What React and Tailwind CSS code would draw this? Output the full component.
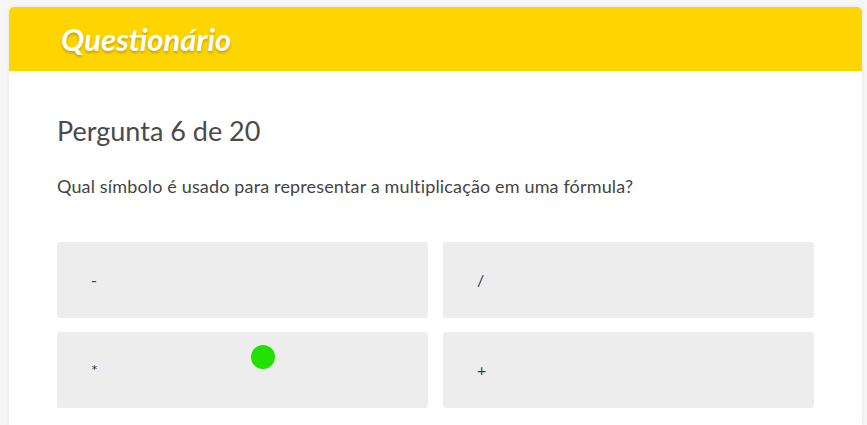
import React from 'react';

const answers = ['-', '/', '*', '+'];

function AnswerButton({ label }) {
    return (
        <button className="h-[76px] bg-[#ededed] rounded-[3px] text-left pl-[34px] text-[16px] text-[#3a3a3a]">
            {label}
        </button>
    );
}

export default function App() {
    return (
        <div className="min-h-screen bg-[#f6f6f6] pt-[7px] pl-[9px] pr-[5px] font-['Lato',sans-serif]">
            <div className="bg-white rounded-t-[5px] shadow-[0_0_4px_rgba(0,0,0,0.08)] min-h-[418px]">
                <div className="h-[64px] bg-[#ffd500] rounded-t-[5px] flex items-center pl-[52px]">
                    <h1 className="text-[31px] font-bold italic text-white [text-shadow:0_2px_3px_rgba(0,0,0,0.25)]">
                        Questionário
                    </h1>
                </div>
                <div className="px-[48px] pt-[40px]">
                    <h2 className="text-[27px] text-[#4a4a4a] leading-[40px]">Pergunta 6 de 20</h2>
                    <p className="mt-[22px] text-[18px] tracking-[0.15px] leading-[26px] text-[#444]">
                        Qual símbolo é usado para representar a multiplicação em uma fórmula?
                    </p>
                    <div className="relative mt-[43px] grid grid-cols-2 gap-x-[15px] gap-y-[14px]">
                        {answers.map((a) => (
                            <AnswerButton key={a} label={a} />
                        ))}
                        <span className="absolute left-[194px] top-[103px] w-[24px] h-[24px] rounded-full bg-[#22e000]" />
                    </div>
                </div>
            </div>
        </div>
    );
}
